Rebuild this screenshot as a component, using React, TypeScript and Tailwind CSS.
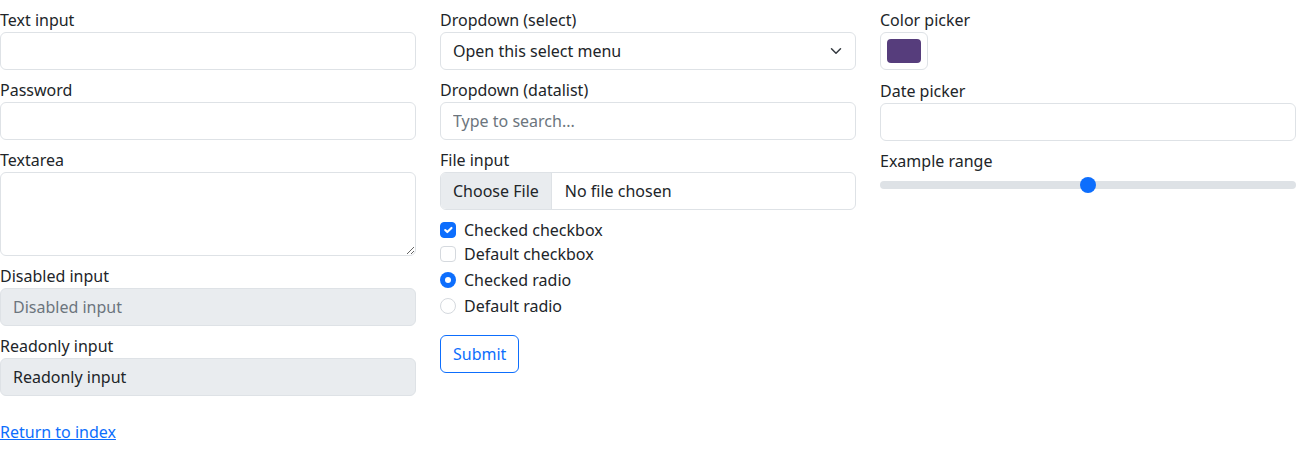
import React from 'react';

const FONT = "font-['Noto_Sans','Liberation_Sans',sans-serif]";

// shared look of bootstrap-ish .form-control, background is set per field
const inputCls =
  'block w-full h-[38px] px-3 py-[6px] text-base leading-6 text-[#212529] border border-[#dee2e6] rounded-md outline-none';

const FieldLabel = ({ children }: { children: React.ReactNode }) => (
  <label className="block text-base leading-6 text-[#212529]">{children}</label>
);

const Group = ({
  children,
  className = 'pt-2',
}: {
  children: React.ReactNode;
  className?: string;
}) => <div className={className}>{children}</div>;

const CheckBox = ({ checked }: { checked?: boolean }) =>
  checked ? (
    <span className="flex items-center justify-center w-4 h-4 rounded-[4px] bg-[#0d6efd] border border-[#0d6efd]">
      <svg viewBox="0 0 20 20" className="w-4 h-4">
        <path
          d="m6 10 3 3 6-6"
          fill="none"
          stroke="#fff"
          strokeWidth="3"
          strokeLinecap="round"
          strokeLinejoin="round"
        />
      </svg>
    </span>
  ) : (
    <span className="block w-4 h-4 rounded-[4px] bg-white border border-[#d5d9de]" />
  );

const Radio = ({ checked }: { checked?: boolean }) =>
  checked ? (
    <span className="flex items-center justify-center w-4 h-4 rounded-full bg-[#0d6efd]">
      <span className="block w-[6px] h-[6px] rounded-full bg-white" />
    </span>
  ) : (
    <span className="block w-4 h-4 rounded-full bg-white border border-[#d5d9de]" />
  );

const CheckRow = ({ children }: { children: React.ReactNode }) => (
  <div className="flex items-center h-6 gap-2 text-base text-[#212529]">{children}</div>
);

export default function App() {
  return (
    <div className={`${FONT} bg-white text-[#212529] w-[1296px] min-h-[452px]`}>
      <div className="grid grid-cols-3 gap-x-6">
        {/* left column */}
        <div>
          <Group>
            <FieldLabel>Text input</FieldLabel>
            <input type="text" className={`${inputCls} bg-white`} />
          </Group>
          <Group>
            <FieldLabel>Password</FieldLabel>
            <input type="password" className={`${inputCls} bg-white`} />
          </Group>
          <Group>
            <FieldLabel>Textarea</FieldLabel>
            <textarea
              rows={3}
              className="block w-full h-[84px] px-3 py-[6px] text-base leading-6 bg-white border border-[#dee2e6] rounded-md outline-none resize-y"
            />
          </Group>
          <Group>
            <FieldLabel>Disabled input</FieldLabel>
            <input
              type="text"
              disabled
              placeholder="Disabled input"
              className={`${inputCls} bg-[#e9ecef] placeholder:text-[#6c757d]`}
            />
          </Group>
          <Group>
            <FieldLabel>Readonly input</FieldLabel>
            <input
              type="text"
              readOnly
              defaultValue="Readonly input"
              className={`${inputCls} bg-[#e9ecef]`}
            />
          </Group>
        </div>

        {/* middle column */}
        <div>
          <Group>
            <FieldLabel>Dropdown (select)</FieldLabel>
            <div className="relative">
              <select className={`${inputCls} bg-white appearance-none pr-9`} defaultValue="">
                <option value="">Open this select menu</option>
                <option value="1">One</option>
                <option value="2">Two</option>
                <option value="3">Three</option>
              </select>
              <svg
                viewBox="0 0 16 16"
                className="absolute right-[14px] top-1/2 -translate-y-1/2 w-3 h-3 pointer-events-none"
              >
                <path
                  d="m2 5 6 6 6-6"
                  fill="none"
                  stroke="#343a40"
                  strokeWidth="2"
                  strokeLinecap="round"
                  strokeLinejoin="round"
                />
              </svg>
            </div>
          </Group>
          <Group>
            <FieldLabel>Dropdown (datalist)</FieldLabel>
            <input
              type="text"
              placeholder="Type to search..."
              className={`${inputCls} bg-white placeholder:text-[#6c757d]`}
            />
          </Group>
          <Group>
            <FieldLabel>File input</FieldLabel>
            <div className="flex items-center w-full h-[38px] border border-[#dee2e6] rounded-md overflow-hidden text-base leading-6 bg-white">
              <span className="flex items-center h-full px-3 bg-[#e9ecef] border-r border-[#dee2e6]">
                Choose File
              </span>
              <span className="pl-[13px]">No file chosen</span>
            </div>
          </Group>

          <div className="pt-2">
            <CheckRow>
              <CheckBox checked />
              <span>Checked checkbox</span>
            </CheckRow>
            <CheckRow>
              <CheckBox />
              <span>Default checkbox</span>
            </CheckRow>
          </div>
          <div className="pt-[2px] flex flex-col gap-[2px]">
            <CheckRow>
              <Radio checked />
              <span>Checked radio</span>
            </CheckRow>
            <CheckRow>
              <Radio />
              <span>Default radio</span>
            </CheckRow>
          </div>

          <div className="pt-[17px]">
            <button
              type="button"
              className="h-[38px] px-3 py-[6px] text-base leading-6 text-[#0d6efd] bg-white border border-[#0d6efd] rounded-md"
            >
              Submit
            </button>
          </div>
        </div>

        {/* right column */}
        <div>
          <Group>
            <FieldLabel>Color picker</FieldLabel>
            <div className="w-12 h-[38px] p-[6px] border border-[#dee2e6] rounded-md bg-white">
              <div className="w-full h-full rounded-[4px] bg-[#563d7c]" />
            </div>
          </Group>
          <Group className="pt-[9px]">
            <FieldLabel>Date picker</FieldLabel>
            <input type="text" className={`${inputCls} bg-white`} />
          </Group>
          <Group>
            <FieldLabel>Example range</FieldLabel>
            <div className="relative flex items-center h-6">
              <div className="w-full h-2 rounded-full bg-[#dee2e6]" />
              <span className="absolute left-1/2 top-1/2 -translate-x-1/2 -translate-y-1/2 w-4 h-4 rounded-full bg-[#0d6efd]" />
            </div>
          </Group>
        </div>
      </div>

      <div className="mt-6">
        <a href="#" className="text-base leading-6 text-[#0d6efd] underline">
          Return to index
        </a>
      </div>
    </div>
  );
}
